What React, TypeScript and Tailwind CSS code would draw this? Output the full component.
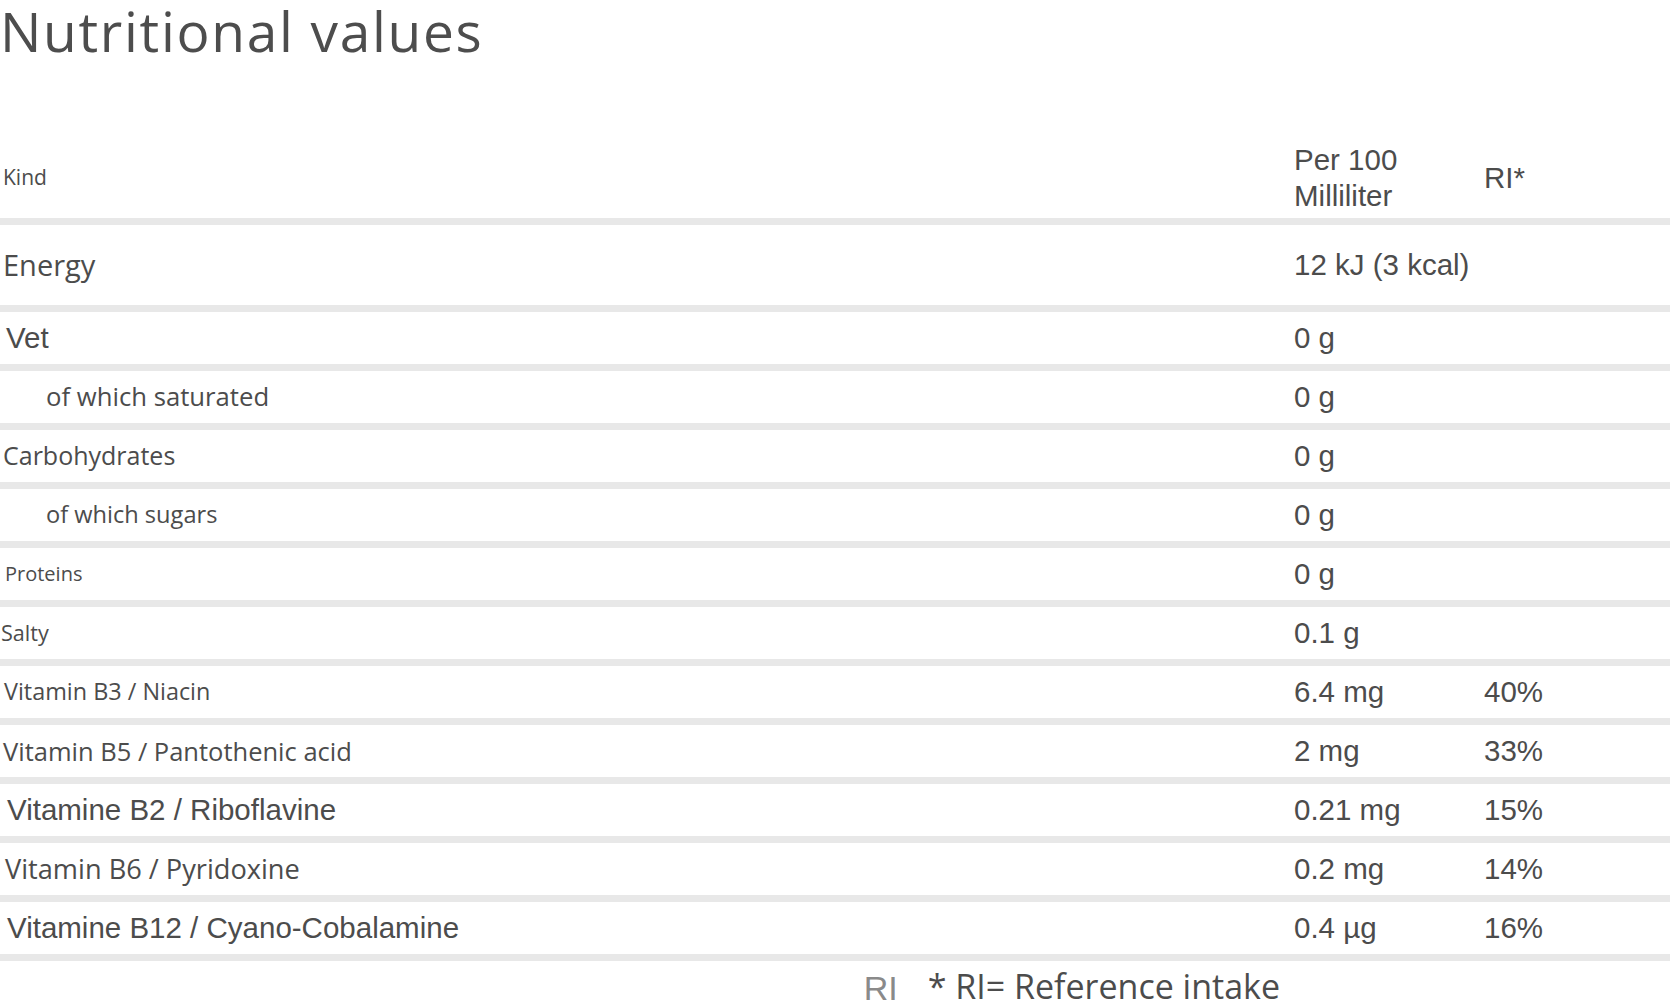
const sans = "font-['Open_Sans',sans-serif]"
const arial = "font-['Liberation_Sans',Arial,sans-serif]"

type Row = {
  label: string
  labelClass: string
  value: string
  ri?: string
  tall?: boolean
}

const rows: Row[] = [
  { label: 'Energy', labelClass: `${sans} text-[29px] pl-[3px]`, value: '12 kJ (3 kcal)', tall: true },
  { label: 'Vet', labelClass: `${arial} text-[29.5px] pl-[6px]`, value: '0 g' },
  { label: 'of which saturated', labelClass: `${sans} text-[25.7px] pl-[46px]`, value: '0 g' },
  { label: 'Carbohydrates', labelClass: `${sans} text-[25px] pl-[3px]`, value: '0 g' },
  { label: 'of which sugars', labelClass: `${sans} text-[23.6px] pl-[46px]`, value: '0 g' },
  { label: 'Proteins', labelClass: `${sans} text-[20px] pl-[5px]`, value: '0 g' },
  { label: 'Salty', labelClass: `${sans} text-[21.6px] pl-[1px]`, value: '0.1 g' },
  { label: 'Vitamin B3 / Niacin', labelClass: `${sans} text-[23.4px] pl-[4px]`, value: '6.4 mg', ri: '40%' },
  { label: 'Vitamin B5 / Pantothenic acid', labelClass: `${sans} text-[25.5px] pl-[3px]`, value: '2 mg', ri: '33%' },
  { label: 'Vitamine B2 / Riboflavine', labelClass: `${arial} text-[29.5px] pl-[7px]`, value: '0.21 mg', ri: '15%' },
  { label: 'Vitamin B6 / Pyridoxine', labelClass: `${sans} text-[27.2px] pl-[5px]`, value: '0.2 mg', ri: '14%' },
  { label: 'Vitamine B12 / Cyano-Cobalamine', labelClass: `${arial} text-[29.5px] pl-[7px]`, value: '0.4 µg', ri: '16%' },
]

export default function App() {
  return (
    <main className="w-[1670px] min-h-screen bg-white text-[#4c4c4c] overflow-hidden">
      <div className="h-[138px]">
        <h1 className={`${sans} text-[55px] leading-[55px] tracking-[1.7px] text-[#4d4d4d] pt-[3px] whitespace-nowrap`}>
          Nutritional values
        </h1>
      </div>

      {/* header */}
      <div className="grid grid-cols-[1294px_190px_1fr] h-[87px] items-center border-b-[7px] border-[#e8e8e8]">
        <div className={`${sans} text-[21px] pl-[3px]`}>Kind</div>
        <div className={`${arial} text-[29.5px] leading-[36px] w-[160px]`}>Per 100 Milliliter</div>
        <div className={`${arial} text-[29.5px]`}>RI*</div>
      </div>

      {rows.map((r) => (
        <div
          key={r.label}
          className={`grid grid-cols-[1294px_190px_1fr] items-center border-b-[7px] border-[#e8e8e8] ${r.tall ? 'h-[87px]' : 'h-[59px]'}`}
        >
          <div className={`${r.labelClass} whitespace-nowrap`}>{r.label}</div>
          <div className={`${arial} text-[29.5px] whitespace-nowrap`}>{r.value}</div>
          <div className={`${arial} text-[29.5px]`}>{r.ri}</div>
        </div>
      ))}

      {/* footnote */}
      <div className="flex justify-end items-start pr-[390px] pt-[8px]">
        <span className={`${arial} text-[34px] leading-[34px] text-[#8a8a8a] mr-[30px] mt-[2px]`}>RI</span>
        <span className={`${sans} text-[34px] leading-[34px] whitespace-nowrap`}>* RI= Reference intake</span>
      </div>
    </main>
  )
}
